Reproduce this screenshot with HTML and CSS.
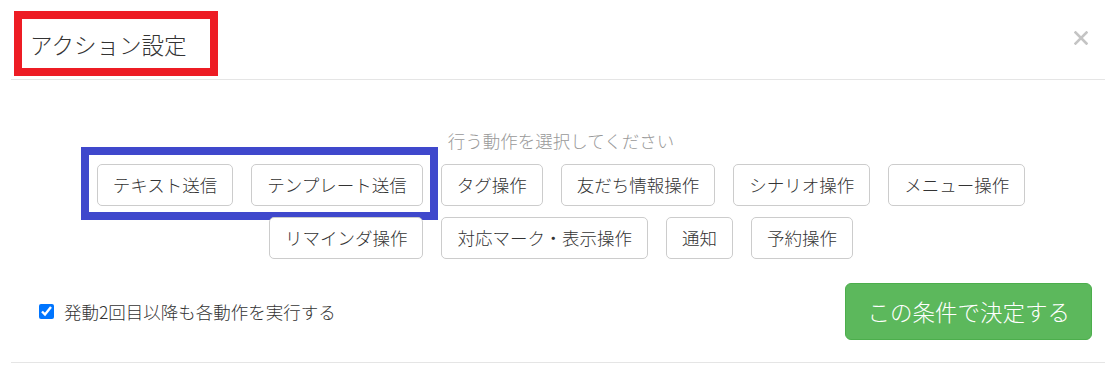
FILE: index.html
```html
<!DOCTYPE html>
<html lang="ja">
<head>
    <meta charset="UTF-8">
    <meta name="viewport" content="width=device-width, initial-scale=1.0">
    <title>アクション設定</title>
    <link rel="stylesheet" href="styles.css">
</head>
<body>
    <div class="modal">
        <div class="modal-header">
            <span class="modal-title">アクション設定</span>
            <button class="close" type="button" aria-label="閉じる">
                <svg width="14" height="14" viewBox="0 0 14 14">
                    <path d="M1.5 1.5 L12.5 12.5 M12.5 1.5 L1.5 12.5" stroke="#c4c4c4" stroke-width="2.6" stroke-linecap="square"/>
                </svg>
            </button>
            <!-- annotation box -->
            <div class="mark mark-red"></div>
        </div>

        <div class="modal-body">
            <p class="hint">行う動作を選択してください</p>
            <div class="action-list">
                <button class="action-btn" type="button">テキスト送信<span class="mark mark-blue"></span></button>
                <button class="action-btn" type="button">テンプレート送信</button>
                <button class="action-btn" type="button">タグ操作</button>
                <button class="action-btn" type="button">友だち情報操作</button>
                <button class="action-btn" type="button">シナリオ操作</button>
                <button class="action-btn" type="button">メニュー操作</button>
                <button class="action-btn" type="button">リマインダ操作</button>
                <button class="action-btn" type="button">対応マーク・表示操作</button>
                <button class="action-btn" type="button">通知</button>
                <button class="action-btn" type="button">予約操作</button>
            </div>
        </div>

        <div class="modal-footer">
            <label class="repeat-option">
                <input type="checkbox" checked>
                <span>発動2回目以降も各動作を実行する</span>
            </label>
            <button class="submit-btn" type="button">この条件で決定する</button>
        </div>
    </div>
</body>
</html>
```

FILE: styles.css
```css
/* Reset default margin and padding */
body {
    margin: 0;
    padding: 0;
    background-color: #fff;
    font-family: "Noto Sans CJK JP", "Noto Sans", sans-serif;
    font-weight: 300;
    color: #333;
}

.modal {
    margin: 0 11px;
}

/* Header */
.modal-header {
    position: relative;
    height: 80px;
    box-sizing: border-box;
    padding: 28px 17px 0 19px;
    border-bottom: 1px solid #e5e5e5;
    display: flex;
    justify-content: space-between;
    align-items: flex-start;
}

.modal-title {
    font-size: 22.5px;
    line-height: 33px;
    color: #333;
}

.close {
    margin-top: 3px;
    padding: 0;
    border: none;
    background: none;
    line-height: 0;
}

/* Annotation boxes drawn over the screen */
.mark {
    position: absolute;
    box-sizing: border-box;
    border-style: solid;
    border-width: 8px;
    pointer-events: none;
}

.mark-red {
    left: 3px;
    top: 11px;
    width: 204px;
    height: 65px;
    border-color: #ed1c24;
}

.mark-blue {
    left: -17px;
    top: -18px;
    width: 357px;
    height: 73px;
    border-color: #3f48cc;
}

/* Body */
.modal-body {
    padding: 49px 0 0 6px;
}

.hint {
    margin: 0 0 11px;
    text-align: center;
    font-size: 17.5px;
    line-height: 24px;
    color: #999;
}

.action-list {
    display: flex;
    flex-wrap: wrap;
    justify-content: center;
    gap: 11px 18px;
    padding: 0 40px;
}

.action-btn {
    position: relative;
    font-family: inherit;
    font-weight: inherit;
    font-size: 17.5px;
    line-height: 24px;
    padding: 8px 15px;
    color: #333;
    background-color: #fff;
    border: 1px solid #ccc;
    border-radius: 5px;
}

/* Footer */
.modal-footer {
    padding: 24px 13px 22px 28px;
    border-bottom: 1px solid #e5e5e5;
    display: flex;
    justify-content: space-between;
    align-items: center;
}

.repeat-option {
    display: flex;
    align-items: center;
    gap: 10px;
    font-size: 17.5px;
    line-height: 24px;
    color: #333;
}

.repeat-option input {
    margin: 0;
    width: 15px;
    height: 15px;
}

.submit-btn {
    font-family: inherit;
    font-weight: inherit;
    font-size: 22.5px;
    line-height: 33px;
    padding: 11px 21px;
    color: #fff;
    background-color: #5cb85c;
    border: 1px solid #4cae4c;
    border-radius: 6px;
}
```
